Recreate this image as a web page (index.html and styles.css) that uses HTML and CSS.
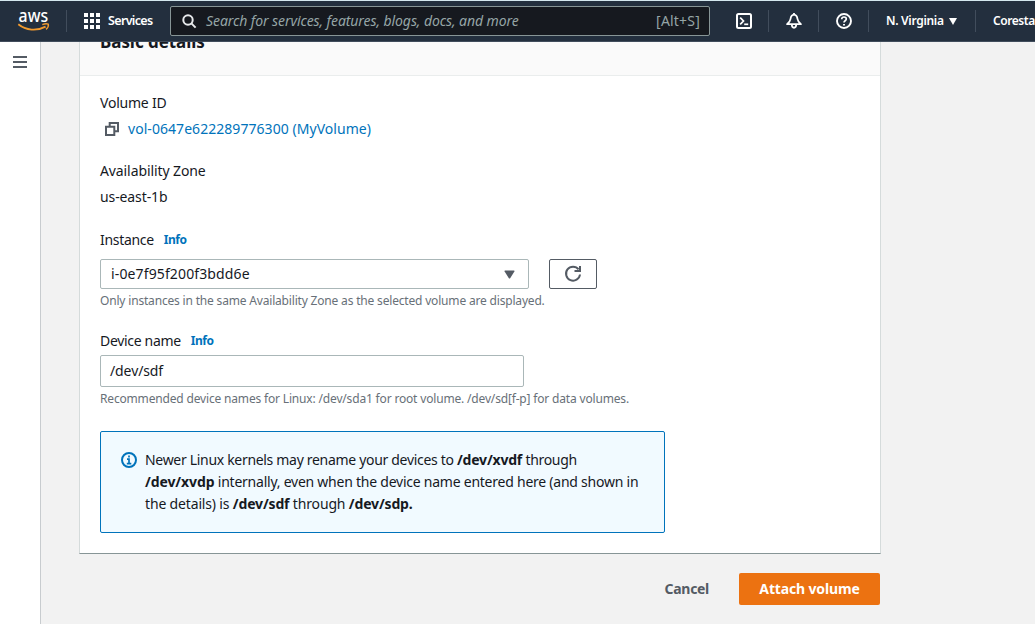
FILE: index.html
```html
<!DOCTYPE html>
<html lang="en">
<head>
<meta charset="utf-8">
<title>Attach volume</title>
<link rel="stylesheet" href="styles.css">
</head>
<body>
<header class="topbar">
  <a class="logo"><svg width="32" height="22" viewBox="0 0 32 22"><text class="logo-text" x="0.6" y="12" textLength="29.5" lengthAdjust="spacingAndGlyphs">aws</text><path d="M0.3 14.3C8 20.6 19 21.3 27.6 16.6" fill="none" stroke="#f29a2e" stroke-width="1.8"/><path d="M24.3 14.7C26.5 13.7 29 13.6 30.3 14.2C30.7 15.8 29.7 18 28 19.4" fill="none" stroke="#f29a2e" stroke-width="1.4"/></svg></a>
  <span class="divider"></span>
  <div class="services">
    <svg width="16" height="16" viewBox="0 0 16 16" fill="#fff"><path d="M0 0h4v4H0zM6 0h4v4H6zM12 0h4v4h-4zM0 6h4v4H0zM6 6h4v4H6zM12 6h4v4h-4zM0 12h4v4H0zM6 12h4v4H6zM12 12h4v4h-4z"/></svg>
    <span class="services-label">Services</span>
  </div>
  <div class="search">
    <svg width="15" height="15" viewBox="0 0 15 15" fill="none" stroke="#e8eaec" stroke-width="2"><circle cx="6" cy="6" r="4.7"/><path d="M9.4 9.4L13.6 13.6"/></svg>
    <span class="search-hint">Search for services, features, blogs, docs, and more</span>
    <span class="search-key">[Alt+S]</span>
  </div>
  <div class="tools">
    <span class="tool"><svg width="16" height="16" viewBox="0 0 16 16" fill="none" stroke="#fff" stroke-width="2"><rect x="1" y="1" width="14" height="14" rx="1.5"/><path d="M4.2 4.6L7.5 8L4.2 11.4" stroke-width="1.7"/><path d="M8.2 11.3H12.2" stroke-width="1.7"/></svg></span>
    <span class="tool"><svg width="16" height="16" viewBox="0 0 16 16" fill="none" stroke="#fff" stroke-width="1.8" stroke-linejoin="round"><path d="M8 1.6C5.6 1.8 4.8 3.6 4.5 6C4.2 8.2 3 9.6 1.1 11.2H14.9C13 9.6 11.8 8.2 11.5 6C11.2 3.6 10.4 1.8 8 1.6z"/><path d="M8 0V2M5.8 11.5C5.8 15.8 10.2 15.8 10.2 11.5"/></svg></span>
    <span class="tool"><svg width="16" height="16" viewBox="0 0 16 16" fill="none" stroke="#fff" stroke-width="1.9"><circle cx="8" cy="8" r="7"/><path d="M5.7 6.2C5.8 3.2 10.4 3.4 10.3 6C10.2 7.8 8 7.7 8 9.6" stroke-width="1.7"/><path d="M8 10.9V12.6"/></svg></span>
  </div>
  <div class="region"><span class="region-label">N. Virginia</span><svg width="8" height="7" viewBox="0 0 8 7"><path d="M0 0H8L4 7z" fill="#fff"/></svg></div>
  <span class="account">Coresta</span>
</header>
<div class="page">
  <aside class="rail"><svg width="14" height="12" viewBox="0 0 14 12" fill="#545b64"><path d="M0 0h14v2H0zM0 5h14v2H0zM0 10h14v2H0z"/></svg></aside>
  <main class="main">
    <section class="card">
      <div class="card-head"><h2 class="card-title">Basic details</h2></div>
      <div class="card-body">
        <div class="label volume-label">Volume ID</div>
        <div class="volume-row">
          <svg width="14" height="14" viewBox="0 0 14 14" fill="none" stroke="#545b64" stroke-width="2"><path d="M4.7 4V1H13V9.3H10"/><path d="M1 4.7H9.3V13H1z"/></svg>
          <a class="volume-link">vol-0647e622289776300 (MyVolume)</a>
        </div>
        <div class="label zone-label">Availability Zone</div>
        <div class="zone">us-east-1b</div>
        <div class="label-row instance-label"><span class="label field-label">Instance</span><a class="info">Info</a></div>
        <div class="instance-row">
          <div class="select"><span class="select-value">i-0e7f95f200f3bdd6e</span><svg width="11" height="9" viewBox="0 0 11 9"><path d="M1 .5H10Q11 .5 10.4 1.5L6.3 8Q5.5 9 4.7 8L.6 1.5Q0 .5 1 .5z" fill="#545b64"/></svg></div>
          <button class="refresh"><svg width="18" height="18" viewBox="0 0 18 18" fill="none" stroke="#545b64" stroke-width="2"><path d="M14.6 4.4A7 7 0 1 0 16 9.5"/><path d="M16 1V6H10.5"/></svg></button>
        </div>
        <div class="help instance-help">Only instances in the same Availability Zone as the selected volume are displayed.</div>
        <div class="label-row device-label"><span class="label field-label">Device name</span><a class="info">Info</a></div>
        <div class="input"><span class="input-value">/dev/sdf</span></div>
        <div class="help device-help">Recommended device names for Linux: /dev/sda1 for root volume. /dev/sd[f-p] for data volumes.</div>
        <div class="alert">
          <svg width="16" height="16" viewBox="0 0 16 16" fill="none" stroke="#0073bb" stroke-width="2"><circle cx="8" cy="8" r="7"/><path d="M8 3.4V5.4M6 7.2H8V11.5M5.8 11.6H10.3" stroke-width="1.7"/></svg>
          <div class="alert-text">
            <div class="line1">Newer Linux kernels may rename your devices to <b>/dev/xvdf</b> through</div>
            <div class="line2"><b>/dev/xvdp</b> internally, even when the device name entered here (and shown in</div>
            <div class="line3">the details) is <b>/dev/sdf</b> through <b>/dev/sdp.</b></div>
          </div>
        </div>
      </div>
    </section>
    <div class="actions"><button class="cancel">Cancel</button><button class="primary">Attach volume</button></div>
  </main>
</div>
</body>
</html>
```

FILE: styles.css
```css
* { box-sizing: border-box; }
body {
  margin: 0;
  height: 624px;
  overflow: hidden;
  background: #f2f2f2;
  font-family: "Noto Sans", "Open Sans", sans-serif;
  font-size: 14px;
  line-height: 22px;
  color: #16191f;
  white-space: nowrap;
}
svg { display: block; flex: none; }
button { font: inherit; margin: 0; padding: 0; background: none; border: 0; }

.topbar {
  display: flex;
  align-items: center;
  height: 42px;
  background: #232f3e;
  border-top: 1px solid #d5e8ef;
  border-bottom: 1px solid #414d5c;
  color: #fff;
  overflow: hidden;
}
.topbar > * { flex: none; }
.logo { margin-left: 18px; width: 32px; }
.logo svg { overflow: visible; }
.logo-text { font-family: "Noto Sans", sans-serif; font-size: 18px; font-weight: 500; fill: #fff; }
.divider { width: 1px; height: 22px; margin-left: 16px; background: #414d5c; }
.services { display: flex; align-items: center; gap: 8px; width: 86px; margin-left: 17px; }
.services-label { font-size: 12.5px; font-weight: 600; letter-spacing: -0.65px; }
.search {
  display: flex;
  align-items: center;
  width: 540px;
  height: 30px;
  padding: 0 9px 0 11px;
  background: #16191f;
  border: 1px solid #879596;
  border-radius: 2px;
  color: #95a5a6;
}
.search-hint { margin-left: 9px; font-style: italic; letter-spacing: -0.08px; }
.search-key { margin-left: auto; letter-spacing: 0.2px; }
.tools { display: flex; margin-left: 9px; }
.tool {
  display: flex;
  justify-content: center;
  align-items: center;
  width: 50px;
  height: 22px;
  border-right: 1px solid #414d5c;
}
.region {
  display: flex;
  align-items: center;
  justify-content: space-between;
  width: 107px;
  height: 22px;
  padding: 0 18px 0 17px;
  border-right: 1px solid #414d5c;
}
.region-label, .account { font-size: 12px; font-weight: 600; letter-spacing: -0.3px; }
.account { margin-left: 17px; letter-spacing: -0.45px; }

.page { display: flex; height: 582px; }
.rail {
  width: 41px;
  flex: none;
  padding: 14px 0 0 13px;
  background: #fff;
  border-right: 1px solid #c8cccf;
}
.main { padding-left: 38px; }
.card {
  width: 802px;
  height: 512px;
  background: #fff;
  border: 1px solid #d5dbdb;
  border-top: 0;
  border-bottom-color: #879596;
}
.card-head { height: 34px; padding-left: 20px; overflow: hidden; background: #fafafa; border-bottom: 1px solid #eaeded; }
.card-title { margin: -11px 0 0; font-size: 17px; line-height: 22px; font-weight: 700; letter-spacing: -0.05px; }
.card-body { padding: 16px 20px 0; }
.volume-label { letter-spacing: -0.22px; }
.volume-row { display: flex; align-items: center; gap: 9px; height: 22px; margin-top: 4px; padding-left: 5px; }
.volume-link { color: #0073bb; letter-spacing: 0.05px; }
.zone-label { margin-top: 20px; letter-spacing: -0.1px; }
.zone { margin-top: 4px; letter-spacing: -0.1px; }
.label-row { display: flex; align-items: center; gap: 10px; height: 22px; }
.field-label { letter-spacing: -0.32px; }
.instance-label { margin-top: 21px; }
.info { color: #0073bb; font-size: 12px; font-weight: 700; letter-spacing: -0.45px; }
.instance-row { display: flex; gap: 20px; margin-top: 8px; }
.select {
  display: flex;
  align-items: center;
  justify-content: space-between;
  width: 429px;
  height: 30px;
  padding: 0 13px 0 10px;
  border: 1px solid #aab7b8;
  border-radius: 2px;
}
.select-value { letter-spacing: 0.13px; }
.refresh {
  display: flex;
  align-items: center;
  justify-content: center;
  width: 48px;
  height: 30px;
  border: 1px solid #545b64;
  border-radius: 2px;
}
.help { height: 22px; color: #687078; font-size: 12px; }
.instance-help { margin-top: 1px; letter-spacing: -0.18px; }
.device-label { margin-top: 18px; }
.input { width: 424px; height: 32px; margin-top: 3px; padding: 4px 9px; border: 1px solid #aab7b8; border-radius: 2px; letter-spacing: -0.1px; }
.device-help { margin-top: 1px; letter-spacing: -0.17px; }
.alert {
  display: flex;
  gap: 8px;
  width: 565px;
  height: 102px;
  margin-top: 21px;
  padding: 17px 20px;
  background: #f1faff;
  border: 1px solid #0073bb;
  border-radius: 2px;
}
.alert svg { margin-top: 3px; }
.line1 { letter-spacing: -0.31px; }
.line1 b { letter-spacing: -0.2px; }
.line2 { letter-spacing: -0.24px; }
.line2 b { letter-spacing: -0.1px; }
.line3 { letter-spacing: -0.16px; }
.actions { display: flex; justify-content: flex-end; width: 801px; margin-top: 19px; }
.cancel, .primary { height: 32px; font-weight: 700; }
.cancel { padding: 0 30px 0 0; color: #545b64; letter-spacing: -0.3px; }
.primary { width: 141px; background: #ec7211; color: #fff; border-radius: 2px; letter-spacing: -0.15px; }
```
